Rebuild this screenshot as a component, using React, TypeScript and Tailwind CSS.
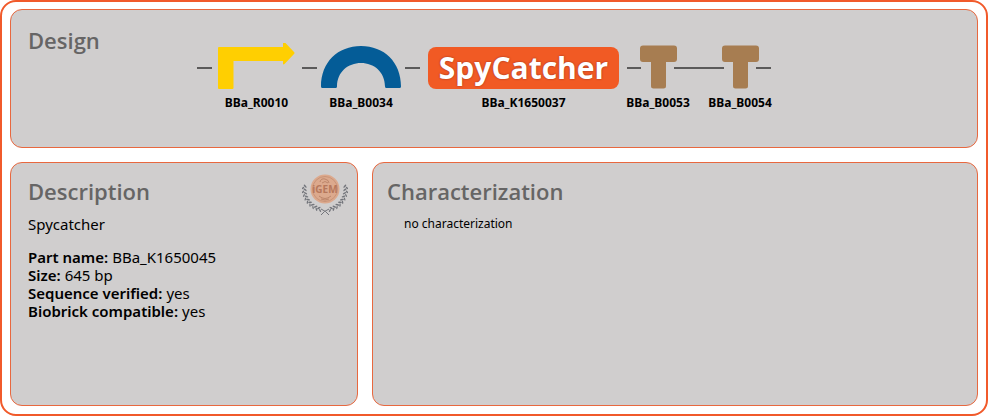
import type { ReactNode } from "react";

const heading =
  "font-['Open_Sans','Noto_Sans',sans-serif] text-[22px] leading-[30px] font-semibold text-[#666565]";

const panel = "rounded-xl border border-[#e8683f] bg-[#d0cece]";

const details = [
  { label: "Part name", value: "BBa_K1650045" },
  { label: "Size", value: "645 bp" },
  { label: "Sequence verified", value: "yes" },
  { label: "Biobrick compatible", value: "yes" },
];

function Part({
  name,
  width = "",
  children,
}: {
  name: string;
  width?: string;
  children: ReactNode;
}) {
  return (
    <figure className={`flex shrink-0 flex-col items-center ${width}`}>
      {children}
      <figcaption className="text-xs leading-5 font-bold whitespace-nowrap text-black">
        {name}
      </figcaption>
    </figure>
  );
}

function Connector() {
  return <span className="mt-[24px] h-[2px] w-[15px] shrink-0 bg-[#5b5a5a]" />;
}

function Promoter() {
  return (
    <svg width="77" height="50" viewBox="218 44 77 50" aria-hidden="true">
      <path
        d="M219 48H283V43.500Q283 42 284.500 43L294 53Q295 54 294 55L284.500 65Q283 66 283 64.500V62H233.500V89Q233.500 90 232.500 90H219Q218 90 218 89V49Q218 48 219 48Z"
        fill="#ffcf01"
      />
    </svg>
  );
}

function BindingSite() {
  return (
    <svg width="80" height="50" viewBox="321 44 80 50" aria-hidden="true">
      <path
        d="M321 87.500C321 63 338 47 361 47S401 63 401 87.500Q401 89 399.500 89H386.500Q385 89 385 87.500C385 73 374 64 361 64S337 73 337 87.500Q337 89 335.500 89H322.500Q321 89 321 87.500Z"
        fill="#045c97"
      />
    </svg>
  );
}

function Terminator({ start, end }: { start: number; end: number }) {
  return (
    <svg width="62" height="50" viewBox="0 0 62 50" aria-hidden="true">
      <path d={`M0 25H${start}M${end} 25H62`} stroke="#5b5a5a" strokeWidth="2" />
      <path
        d="M16 2.500H47Q50 2.500 50 5.500V16Q50 19 47 19H39V43Q39 45.500 36.500 45.500H26.500Q24 45.500 24 43V19H16Q13 19 13 16V5.500Q13 2.500 16 2.500Z"
        fill="#a77d51"
      />
    </svg>
  );
}

const leaves = Array.from({ length: 9 }, (_, i) => i);

function Medal() {
  return (
    <svg
      className="shrink-0"
      width="46"
      height="44"
      viewBox="0 0 46 44"
      role="img"
      aria-label="iGEM bronze medal"
    >
      <circle cx="23" cy="16" r="14.500" fill="#dca98d" />
      <circle cx="23" cy="16" r="12.500" fill="none" stroke="#c99478" />
      <path
        d="M18 9q1-4 5-3t4 4M20 10q3-3 6 0M17 23q6 5 12 0M19 26q4 2 8 0"
        fill="none"
        stroke="#bd866b"
      />
      <text
        x="23"
        y="20"
        textAnchor="middle"
        fontSize="10"
        fontWeight="700"
        fill="#b6775b"
      >
        iGEM
      </text>
      <g fill="#73757b">
        {leaves.map((i) => (
          <g key={i} transform={`rotate(${8 - i * 10} 23 16)`}>
            <ellipse cx="3" cy="16" rx="2" ry="0.800" transform="rotate(40 3 16)" />
            <ellipse cx="1" cy="18" rx="1.600" ry="0.700" transform="rotate(-50 1 18)" />
          </g>
        ))}
        {leaves.map((i) => (
          <g key={i} transform={`rotate(${i * 10 - 8} 23 16)`}>
            <ellipse cx="43" cy="16" rx="2" ry="0.800" transform="rotate(-40 43 16)" />
            <ellipse cx="45" cy="18" rx="1.600" ry="0.700" transform="rotate(50 45 18)" />
          </g>
        ))}
      </g>
      <path
        d="M19 36q5 2 8 6M27 36q-5 2-8 6"
        fill="none"
        stroke="#73757b"
        strokeWidth="1"
      />
    </svg>
  );
}

export default function App() {
  return (
    <div className="min-h-screen bg-white font-['Noto_Sans','Open_Sans',sans-serif] text-black">
      <main className="flex min-h-screen flex-col gap-[14px] rounded-2xl border-2 border-[#f15a2b] px-2 pt-[7px] pb-2">
        <section className={`${panel} flex min-h-[139px] items-start px-[17px] pt-[15px]`}>
          <h2 className={`${heading} w-[169px] shrink-0`}>Design</h2>
          <div className="flex items-start pt-[18px]">
            <Connector />
            <div className="flex shrink-0 pr-[7px] pl-[6px]">
              <Part name="BBa_R0010">
                <Promoter />
              </Part>
            </div>
            <Connector />
            <div className="flex shrink-0 px-1">
              <Part name="BBa_B0034">
                <BindingSite />
              </Part>
            </div>
            <Connector />
            <div className="flex shrink-0 px-2">
              <Part name="BBa_K1650037">
                <div className="flex h-[50px] items-center">
                  <div className="flex h-[42px] w-[191px] items-center justify-center rounded-lg bg-[#f15a24] font-['Open_Sans','Noto_Sans',sans-serif] text-[30px] leading-[40px] font-bold text-white [text-shadow:0_0_2px_#8c2a1c]">
                    SpyCatcher
                  </div>
                </div>
              </Part>
            </div>
            <Part name="BBa_B0053" width="w-[62px]">
              <Terminator start={14} end={47} />
            </Part>
            <span className="mt-[24px] h-[2px] w-5 shrink-0 bg-[#5b5a5a]" />
            <Part name="BBa_B0054" width="w-[62px]">
              <Terminator start={15} end={47} />
            </Part>
          </div>
        </section>

        <div className="grid flex-1 grid-cols-[348fr_606fr] gap-[14px]">
          <section className={`${panel} px-[17px] pt-[13px]`}>
            <div className="flex h-[30px] items-start justify-between">
              <h2 className={heading}>Description</h2>
              <div className="-mt-[3px] -mr-2">
                <Medal />
              </div>
            </div>
            <p className="mt-[9px] text-[15px] leading-[18px]">Spycatcher</p>
            <dl className="mt-[15px] text-[15px] leading-[18px]">
              {details.map(({ label, value }) => (
                <div key={label} className="flex gap-1">
                  <dt className="font-semibold">{label}:</dt>
                  <dd>{value}</dd>
                </div>
              ))}
            </dl>
          </section>

          <section className={`${panel} px-[14px] pt-[13px]`}>
            <h2 className={heading}>Characterization</h2>
            <p className="mt-[9px] pl-[17px] text-xs leading-[18px]">no characterization</p>
          </section>
        </div>
      </main>
    </div>
  );
}
